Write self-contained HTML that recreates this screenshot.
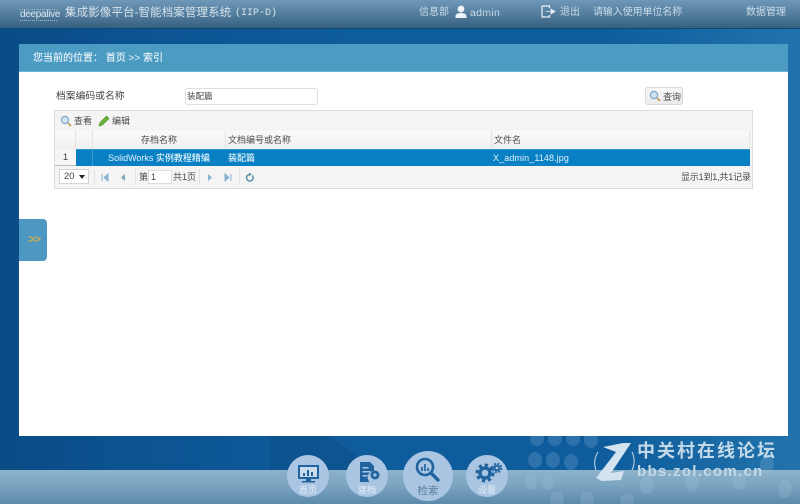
<!DOCTYPE html>
<html lang="zh">
<head>
<meta charset="utf-8">
<title>集成影像平台</title>
<style>
html,body{margin:0;padding:0}
body{width:800px;height:504px;overflow:hidden;position:relative;font-family:"Liberation Sans","Noto Sans CJK SC",sans-serif;background:#0d5a98}
.a{position:absolute;white-space:nowrap}
#bg{left:0;top:0;width:800px;height:504px;background:linear-gradient(90deg,#0a4c85 0,#0b5290 15%,#0f5c9c 45%,#0e5c9c 75%,#2273ad 100%)}
#top{left:0;top:0;width:800px;height:28px;background:linear-gradient(#6f98b8,#517a9b 55%,#35607f);border-bottom:1px solid #0b4674}
#low{left:0;top:470px;width:800px;height:34px;background:linear-gradient(#8db3cc,#7ba4c0 45%,#5d89aa)}
#panel{left:19px;top:44px;width:769px;height:392px;background:#fff}
#phead{left:19px;top:44px;width:769px;height:28px;background:#4b9bc3;border-bottom:1px solid #6fb6d6;box-sizing:border-box}
.t{color:#c9dbe8;font-size:10px;line-height:12px}
.d{color:#4a4a4a;font-size:9px;line-height:12px}
#box{left:54px;top:110px;width:699px;height:79px;background:#f4f4f4;border:1px solid #dcdcdc;box-sizing:border-box}
.hc{top:131px;height:18px;background:linear-gradient(#fafafa,#f0f0f0);border-right:1px solid #e3e3e3;box-sizing:border-box}
.circ{border-radius:50%;background:#a9c5e2}
.lab{color:#e4eef7;font-size:9px;line-height:10px;text-align:center}
.dot{position:absolute;border-radius:50%;background:rgba(170,205,230,.2)}
</style>
</head>
<body>
<div class="a" id="bg"></div>
<svg class="a" style="left:270px;top:436px" width="130" height="34"><polygon points="0,0 60,0 105,34 0,34" fill="#0c4f89" opacity=".55"/></svg>
<div class="a" id="low"></div>
<div class="a" id="top"></div>

<!-- dots -->
<div class="a" style="left:520px;top:436px;width:280px;height:68px;overflow:hidden">
<i class="dot" style="left:10px;top:-4px;width:14px;height:14px"></i>
<i class="dot" style="left:28px;top:-4px;width:14px;height:14px"></i>
<i class="dot" style="left:46px;top:-4px;width:14px;height:14px"></i>
<i class="dot" style="left:64px;top:-4px;width:14px;height:16px"></i>
<i class="dot" style="left:8px;top:16px;width:14px;height:16px"></i>
<i class="dot" style="left:26px;top:16px;width:14px;height:16px"></i>
<i class="dot" style="left:44px;top:18px;width:14px;height:16px"></i>
<i class="dot" style="left:5px;top:38px;width:12px;height:16px"></i>
<i class="dot" style="left:22px;top:38px;width:12px;height:16px"></i>
<i class="dot" style="left:120px;top:40px;width:14px;height:18px"></i>
<i class="dot" style="left:165px;top:38px;width:14px;height:18px"></i>
<i class="dot" style="left:212px;top:36px;width:14px;height:18px"></i>
<i class="dot" style="left:240px;top:20px;width:14px;height:18px"></i>
<i class="dot" style="left:258px;top:44px;width:14px;height:18px"></i>
<i class="dot" style="left:30px;top:56px;width:14px;height:14px"></i>
<i class="dot" style="left:60px;top:56px;width:14px;height:14px"></i>
<i class="dot" style="left:100px;top:58px;width:14px;height:14px"></i>
</div>

<!-- header -->
<div class="a" style="left:20px;top:9px;width:37px;height:10px;border-top:1px dotted #9fb8cc;border-bottom:1px dotted #9fb8cc;color:#dce7ef;font-size:10px;line-height:10px;letter-spacing:-.3px">deepalive</div>
<div class="a" style="left:65px;top:6px;color:#d6e2ea;font-size:11.500px;line-height:15px;letter-spacing:.1px">集成影像平台-智能档案管理系统</div>
<div class="a" style="left:235px;top:6px;color:#d6e2ea;font-family:'Liberation Mono',monospace;font-size:10px;line-height:15px">(IIP-D)</div>
<div class="a t" style="left:419px;top:7px">信息部</div>
<svg class="a" style="left:455px;top:5px" width="12" height="14" viewBox="0 0 12 14"><circle cx="6" cy="4" r="3.400" fill="#eef3f7"/><path d="M.5 13V11C.5 9 3 8 6 8s5.500 1 5.500 3v2z" fill="#eef3f7"/></svg>
<div class="a t" style="left:470px;top:7px;font-size:10.500px;letter-spacing:.3px">admin</div>
<svg class="a" style="left:541px;top:5px" width="15" height="13" viewBox="0 0 15 13"><path d="M8.500 3V1H1v11h7.500V10" fill="none" stroke="#e6edf3" stroke-width="1.300"/><path d="M5 6.500h5V4l4 2.500L10 9V6.500" fill="#e6edf3" stroke="#e6edf3" stroke-width=".8"/></svg>
<div class="a t" style="left:560px;top:7px">退出</div>
<div class="a t" style="left:593px;top:7px;letter-spacing:-.1px">请输入使用单位名称</div>
<div class="a t" style="left:746px;top:7px">数据管理</div>

<!-- panel -->
<div class="a" id="panel"></div>
<div class="a" id="phead"></div>
<div class="a" style="left:33px;top:53px;color:#e8f2f7;font-size:10px;line-height:12px;font-weight:500">您当前的位置： 首页 &gt;&gt; 索引</div>

<div class="a" style="left:56px;top:90px;color:#444;font-size:9.800px;line-height:13px">档案编码或名称</div>
<div class="a" style="left:185px;top:88px;width:133px;height:17px;border:1px solid #dfdfdf;border-radius:3px;box-sizing:border-box;background:#fff"></div>
<div class="a" style="left:187px;top:90px;color:#444;font-size:8.500px;line-height:12px">装配篇</div>
<div class="a" style="left:645px;top:87px;width:38px;height:18px;border:1px solid #d5dbe0;border-radius:3px;box-sizing:border-box;background:linear-gradient(#f7f7f7,#e9ebed)"></div>
<svg class="a" style="left:649px;top:90px" width="12" height="12" viewBox="0 0 12 12"><circle cx="5" cy="5" r="3.600" fill="#cfe3f5" stroke="#7ea9cc" stroke-width="1.200"/><path d="M8 8l3 3" stroke="#c89a55" stroke-width="1.800"/></svg>
<div class="a d" style="left:663px;top:91px">查询</div>

<!-- grid -->
<div class="a" id="box"></div>
<svg class="a" style="left:60px;top:115px" width="12" height="12" viewBox="0 0 12 12"><circle cx="5" cy="5" r="3.600" fill="#cfe3f5" stroke="#7ea9cc" stroke-width="1.200"/><path d="M8 8l3 3" stroke="#c89a55" stroke-width="1.800"/></svg>
<div class="a d" style="left:74px;top:115px">查看</div>
<svg class="a" style="left:98px;top:115px" width="12" height="12" viewBox="0 0 12 12"><path d="M1 11l1-3.500L8.500 1l2.500 2.500L4.500 10z" fill="#6cb33f" stroke="#3f8a22" stroke-width=".6"/></svg>
<div class="a d" style="left:112px;top:115px">编辑</div>

<div class="a hc" style="left:55px;width:21px"></div>
<div class="a hc" style="left:76px;width:17px"></div>
<div class="a hc" style="left:93px;width:133px"></div>
<div class="a hc" style="left:226px;width:266px"></div>
<div class="a hc" style="left:492px;width:258px"></div>
<div class="a d" style="left:93px;width:132px;top:134px;text-align:center">存档名称</div>
<div class="a d" style="left:228px;top:134px">文档编号或名称</div>
<div class="a d" style="left:494px;top:134px">文件名</div>

<div class="a" style="left:55px;top:149px;width:21px;height:17px;background:#f5f5f5;border-bottom:1px solid #bbb;box-sizing:border-box;color:#444;font-size:9.500px;line-height:17px;text-align:center">1</div>
<div class="a" style="left:76px;top:149px;width:674px;height:17px;background:#0880c3;border-top:1px solid #2d9ad3;box-sizing:border-box"></div>
<div class="a" style="left:92px;top:149px;width:1px;height:17px;background:#3a9ad0"></div>
<div class="a" style="left:93px;top:152px;width:132px;text-align:center;color:#e2f3fc;font-size:9px;line-height:12px;font-weight:500">SolidWorks 实例教程精编</div>
<div class="a" style="left:228px;top:152px;color:#e2f3fc;font-size:9px;line-height:12px;font-weight:500">装配篇</div>
<div class="a" style="left:493px;top:152px;color:#e2f3fc;font-size:9px;line-height:12px;letter-spacing:.1px">X_admin_1148.jpg</div>

<!-- pager -->
<div class="a" style="left:59px;top:169px;width:30px;height:15px;background:#fff;border:1px solid #d4d4d4;box-sizing:border-box;color:#444;font-size:9.500px;line-height:13px;padding-left:4px">20</div>
<div class="a" style="left:79px;top:175px;width:0;height:0;border:3px solid transparent;border-top:4px solid #222;border-bottom:0"></div>
<div class="a" style="left:94px;top:169px;width:1px;height:16px;background:#e2e2e2"></div>
<div class="a" style="left:135px;top:169px;width:1px;height:16px;background:#e2e2e2"></div>
<div class="a" style="left:199px;top:169px;width:1px;height:16px;background:#e2e2e2"></div>
<div class="a" style="left:239px;top:169px;width:1px;height:16px;background:#e2e2e2"></div>
<svg class="a" style="left:100px;top:172px" width="156" height="11" viewBox="0 0 156 11">
<path d="M2 2v7M8 2v7L4 5.500z" stroke="#88b4cf" stroke-width="1" fill="#88b4cf"/>
<path d="M25 2v7l-4-3.500z" fill="#7fa6bd"/>
<path d="M108 2v7l4-3.500z" fill="#88b4cf"/>
<path d="M125 2v7l4-3.500zM131 2v7" stroke="#88b4cf" fill="#88b4cf"/>
<path d="M152.200 3.500a3.300 3.300 0 1 1-2.200-1" fill="none" stroke="#5f93ad" stroke-width="1.500"/>
<path d="M149 .5l3 2-3 1.500z" fill="#5f93ad"/>
</svg>
<div class="a d" style="left:139px;top:171px">第</div>
<div class="a" style="left:148px;top:170px;width:24px;height:14px;background:#fff;border:1px solid #ddd;box-sizing:border-box;color:#444;font-size:9px;line-height:12px;padding-left:2px">1</div>
<div class="a d" style="left:173px;top:171px">共1页</div>
<div class="a d" style="left:681px;top:171px;letter-spacing:-.18px">显示1到1,共1记录</div>

<!-- side tab -->
<div class="a" style="left:19px;top:219px;width:28px;height:42px;background:#4c98c2;border-radius:0 4px 4px 0"></div>
<div class="a" style="left:28px;top:233px;color:#c9b054;font-size:12px;line-height:13px;font-weight:bold;letter-spacing:-1px">&gt;&gt;</div>

<!-- nav -->
<div class="a circ" style="left:287px;top:455px;width:42px;height:42px"></div>
<div class="a circ" style="left:346px;top:455px;width:42px;height:42px"></div>
<div class="a circ" style="left:403px;top:451px;width:50px;height:50px"></div>
<div class="a circ" style="left:466px;top:455px;width:42px;height:42px"></div>
<svg class="a" style="left:287px;top:451px" width="230" height="42" viewBox="0 0 230 42">
<g fill="#21639f">
<path d="M11 14h21v14H11zM19 28h5v2h4v1.500H15V30h4z"/>
<path d="M13 16h17v10H13z" fill="#c8dcee"/>
<path d="M16 25v-3h2v3zM20 25v-6h2v6zM24 25v-4h2v4z"/>
<path d="M73 11h10l4 4v5a6.500 6.500 0 0 0-4.500 11H73zM75.500 16v1.500h6V16zM75.500 20v1.500h8V20zM75.500 24v1.500h5V24z" fill-rule="evenodd"/>
<circle cx="88" cy="24" r="4.500"/>
<path d="M86 24h4M88 22v4" stroke="#c8dcee" stroke-width="1"/>
</g>
<g fill="none" stroke="#21639f">
<circle cx="138" cy="16" r="8" stroke-width="2.600"/>
<path d="M144 22l7 7" stroke-width="3.400" stroke-linecap="round"/>
<path d="M135 20v-4M138 20v-7M141 20v-3" stroke-width="1.700"/>
</g>
<g fill="none" stroke="#21639f">
<circle cx="198" cy="22" r="5" stroke-width="3.400"/>
<circle cx="198" cy="22" r="8" stroke-width="3" stroke-dasharray="3.200 3"/>
<circle cx="210" cy="17" r="2.400" stroke-width="2"/>
<circle cx="210" cy="17" r="4.400" stroke-width="1.800" stroke-dasharray="2 1.500"/>
</g>
</svg>
<div class="a lab" style="left:287px;top:485px;width:42px">首页</div>
<div class="a lab" style="left:346px;top:485px;width:42px">建档</div>
<div class="a lab" style="left:403px;top:486px;width:50px;color:#567d9f;font-size:10.500px;line-height:11px">检索</div>
<div class="a lab" style="left:466px;top:485px;width:42px">设置</div>

<!-- watermark -->
<svg class="a" style="left:590px;top:440px" width="48" height="44" viewBox="0 0 48 44">
<path d="M13 7L33 3l8 0L21 33l13-2-3 9-19 1-6-3L26 12z" fill="#d3e3ef"/>
<path d="M8 12a16 18 0 0 0-2 18M42 12a16 18 0 0 1 0 18" fill="none" stroke="#c6dbe9" stroke-width="1"/>
</svg>
<div class="a" style="left:637px;top:441px;color:#c4d9e8;font-size:18px;line-height:21px;font-weight:bold;letter-spacing:2px">中关村在线论坛</div>
<div class="a" style="left:637px;top:463px;color:#c4d9e8;font-size:15px;line-height:17px;font-weight:bold;letter-spacing:1.300px">bbs.zol.com.cn</div>
</body>
</html>
